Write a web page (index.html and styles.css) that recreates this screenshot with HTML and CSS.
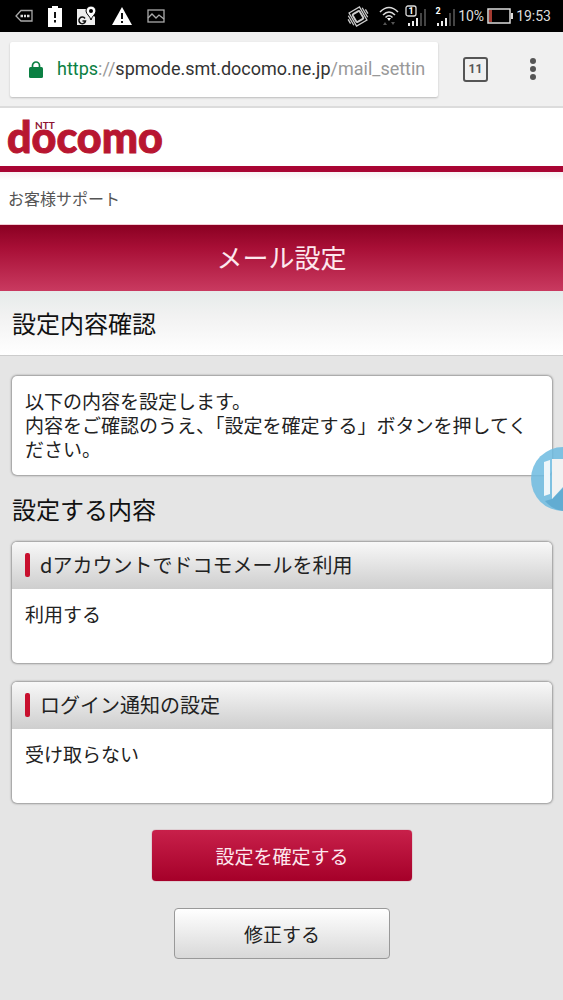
FILE: index.html
```html
<!DOCTYPE html>
<html lang="ja">
<head>
<meta charset="utf-8">
<meta name="viewport" content="width=device-width, initial-scale=1">
<title>メール設定</title>
<link rel="stylesheet" href="styles.css">
</head>
<body>
<div class="status-bar">
  <div class="status-left">
    <svg width="18" height="14" viewBox="0 0 18 14" fill="none" stroke="#aaa"><path d="M6 1.5H17V12H6L1 7Z" stroke-width="1.3"/><path d="M5.5 7H8M9 7h2M12 7h2.500" stroke="#ddd" stroke-width="2.500"/></svg>
    <svg width="14" height="21" viewBox="0 0 14 21"><path d="M4 0H10V2H14V21H0V2H4Z" fill="#fff"/><path d="M7 6V12M7 14V16.500" stroke="#111" stroke-width="2"/></svg>
    <svg width="20" height="20" viewBox="0 0 20 20"><path d="M0 3H10L18 11V19H0Z" fill="#eee"/><path d="M8 12.500A3.300 3.300 0 1 0 8.500 15H5.500" fill="none" stroke="#111" stroke-width="1.500"/><path d="M14 0A5 5 0 0 1 19 5C19 8 15 10 14 14C13 10 9 8 9 5A5 5 0 0 1 14 0Z" fill="#fff" stroke="#000"/><circle cx="14" cy="5" r="2" fill="#000"/></svg>
    <svg width="20" height="18" viewBox="0 0 20 18"><path d="M10 0L20 18H0Z" fill="#fff"/><path d="M10 6V12M10 14V16" stroke="#111" stroke-width="2"/></svg>
    <svg width="18" height="14" viewBox="0 0 18 14" fill="none" stroke="#aaa" stroke-width="1.300"><rect x="1" y="1" width="16" height="12"/><path d="M1 9L5 5L9 9L12 6L17 10"/></svg>
  </div>
  <div class="status-right">
    <svg width="22" height="21" viewBox="0 0 22 21" fill="none" stroke="#ccc" stroke-width="1.300"><g transform="rotate(-30 11 10.500)"><rect x="7" y="6" width="8" height="9" rx="1" stroke-width="1.800"/><path d="M5 3H17V18H5ZM3 5V16M19 5V16M1 8V13M21 8V13"/></g></svg>
    <svg class="wifi" width="20" height="20" viewBox="0 0 20 20" fill="none" stroke="#ddd" stroke-width="1.600"><path d="M1 6Q10-3 19 6M4 9Q10 3 16 9M6.500 11.500Q10 8 13.500 11.500"/><path d="M8 12H12L10 15Z" fill="#fff" stroke="none"/><path d="M4 19L6 16L8 19ZM12 16H16L14 19Z" fill="#555" stroke="none"/></svg>
    <svg width="21" height="22" viewBox="0 0 21 22"><rect x="1" y="1" width="10" height="10" rx="2" fill="none" stroke="#ddd" stroke-width="1.300"/><text class="sim" x="6" y="9" text-anchor="middle">1</text><path d="M4 21V18M8 21V16M12 21V13" stroke="#eee" stroke-width="2"/><path d="M16 21V8M20 21V4" stroke="#444" stroke-width="2"/></svg>
    <svg class="signal" width="21" height="22" viewBox="0 0 21 22"><text class="sim" x="4" y="9" text-anchor="middle">2</text><path d="M4 21V18M8 21V16M12 21V13" stroke="#eee" stroke-width="2"/><path d="M16 21V8M20 21V4" stroke="#444" stroke-width="2"/></svg>
    <span>10%</span>
    <svg width="26" height="16" viewBox="0 0 26 16"><rect x="1" y="1" width="22" height="14" fill="none" stroke="#ddd" stroke-width="1.500"/><path d="M2 2H5V14H2Z" fill="#a43a30"/><path d="M24 5H26V11H24Z" fill="#ddd"/></svg>
    <span>19:53</span>
  </div>
</div>

<div class="toolbar">
  <button class="address" type="button" aria-label="アドレスバー">
    <svg width="14" height="17" viewBox="0 0 14 17"><path d="M3.500 7V4.500A3.500 3.500 0 0 1 10.500 4.500V7" fill="none" stroke="#0b8043" stroke-width="1.700"/><rect y="6" width="14" height="11" rx="1.500" fill="#0b8043"/></svg>
    <span class="url"><span class="scheme">https</span><span class="dim">://</span>spmode.smt.docomo.ne.jp<span class="dim">/mail_settin</span></span>
  </button>
  <button class="tabs" type="button" aria-label="タブ">11</button>
  <button class="more" type="button" aria-label="メニュー">
    <svg width="6" height="22" viewBox="0 0 6 22" fill="#555"><circle cx="3" cy="3" r="3"/><circle cx="3" cy="11" r="3"/><circle cx="3" cy="19" r="3"/></svg>
  </button>
</div>

<header class="brand">
  <svg width="172" height="58" viewBox="-8 -13 172 58" role="img" aria-label="NTT docomo"><text class="wordmark" x="-1" y="32">docomo</text><text class="ntt" x="27" y="8">NTT</text></svg>
</header>
<div class="support">お客様サポート</div>
<h1 class="title">メール設定</h1>

<main>
  <h2 class="section">設定内容確認</h2>
  <div class="content">
    <p class="panel notice">以下の内容を設定します。<br>内容をご確認のうえ、「設定を確定する」ボタンを押してください。</p>
    <h2 class="subhead">設定する内容</h2>
    <section class="panel card">
      <h3>dアカウントでドコモメールを利用</h3>
      <p>利用する</p>
    </section>
    <section class="panel card">
      <h3>ログイン通知の設定</h3>
      <p>受け取らない</p>
    </section>
    <div class="actions">
      <button class="btn confirm" type="button">設定を確定する</button>
      <button class="btn edit" type="button">修正する</button>
    </div>
  </div>
  <div class="floating">
    <svg width="64" height="64" viewBox="0 0 64 64"><circle cx="32" cy="32" r="32" fill="#6dbbe0" fill-opacity=".85"/><path d="M21 52L32 41V64Q22 63 14 54Z" fill="#4e9fc8" opacity=".6"/><path d="M13 15L19 13V47L13 49Z" fill="#eef6fa"/><path d="M21 12H44V40H32L21 52Z" fill="#f2f2f2"/></svg>
  </div>
</main>
</body>
</html>
```

FILE: styles.css
```css
* { box-sizing: border-box; }
body {
  margin: 0;
  min-height: 100vh;
  display: flex;
  flex-direction: column;
  background: #e5e5e5;
  color: #222;
  font-family: "Noto Sans CJK JP", sans-serif;
}
h1, h2, h3, p { margin: 0; font-weight: 400; }
button { font-family: inherit; border: 0; margin: 0; }

.status-bar {
  height: 32px;
  padding: 0 12px 0 15px;
  display: flex;
  align-items: center;
  justify-content: space-between;
  background: #000;
  color: #ddd;
  font: 14px Roboto, sans-serif;
}
.status-left, .status-right { display: flex; align-items: center; }
.status-left { gap: 15px; }
.status-right { gap: 3px; }
.wifi { margin: 0 3px 0 7px; }
.signal { margin-left: 5px; }
.sim { font: 700 9px Roboto, sans-serif; fill: #fff; }

.toolbar {
  height: 76px;
  padding: 0 27px 0 10px;
  display: flex;
  align-items: center;
  background: #f0f0f0;
  border-bottom: 2px solid #dcdcdc;
}
.address {
  flex: 1;
  min-width: 0;
  height: 55px;
  padding: 0 8px 0 19px;
  display: flex;
  align-items: center;
  gap: 14px;
  background: #fff;
  border-radius: 2px;
  box-shadow: 0 1px 2px #bbb;
  color: #333;
  text-align: left;
}
.address svg { flex: none; }
.url {
  overflow: hidden;
  white-space: nowrap;
  font: 18px/26px Roboto, sans-serif;
}
.scheme { color: #0b8043; }
.dim { color: #999; }
.tabs {
  width: 25px;
  height: 25px;
  margin: 0 42px 0 25px;
  padding: 0;
  border: 2px solid #555;
  border-radius: 3px;
  background: none;
  color: #555;
  font: 700 12px Roboto, sans-serif;
}
.more { padding: 0; display: flex; background: none; }

.brand {
  background: #fff;
  border-bottom: 6px solid #a90533;
}
.brand svg { display: block; }
.wordmark {
  font: 900 43px Lato, sans-serif;
  fill: #b81631;
  stroke: #b81631;
  stroke-width: 1px;
}
.ntt { font: 700 10px Lato, sans-serif; fill: #8c1230; }

.support {
  padding: 14px 8px;
  background: linear-gradient(#f8f0f2, #fff 8px);
  border-bottom: 1px solid #f3ccd5;
  color: #555;
  font-size: 16px;
  line-height: 24px;
}
.title {
  padding: 13px 0 15px;
  background: linear-gradient(#8a0022, #a80f36 35%, #c93a60);
  color: #fde8ee;
  font-size: 26px;
  line-height: 38px;
  text-align: center;
}
main { position: relative; flex: 1; overflow: hidden; }
.section {
  padding: 16px 12px;
  background: linear-gradient(#e6ebea, #f2f2f2 40%, #fff);
  border-bottom: 1px solid #ccc;
  color: #111;
  font-size: 24px;
  line-height: 32px;
}
.content { padding: 20px 11px 39px 12px; }
.panel {
  overflow: hidden;
  background: #fff;
  border-radius: 5px;
  box-shadow: 0 0 2px 1px #999;
  font-size: 19px;
  line-height: 24px;
}
.notice { padding: 13px 12px 14px 13px; }
.subhead {
  margin: 18px 0 17px;
  color: #111;
  font-size: 24px;
  line-height: 32px;
}
.card + .card { margin-top: 19px; }
.card h3 {
  padding: 11px 13px 12px;
  display: flex;
  align-items: center;
  gap: 10px;
  background: linear-gradient(#f8f8f8, #cecece);
  font-size: 20px;
  line-height: 24px;
}
.card h3::before {
  content: "";
  width: 5px;
  height: 24px;
  border-radius: 2px;
  background: #c8102e;
}
.card p { padding: 13px 13px 37px; }
.actions {
  margin-top: 27px;
  display: flex;
  flex-direction: column;
  align-items: center;
  gap: 27px;
}
.btn {
  height: 51px;
  padding: 0;
  border-radius: 4px;
  font-size: 19px;
  line-height: 24px;
}
.confirm {
  width: 48%;
  background: linear-gradient(#c8204a, #a50029);
  box-shadow: 0 0 1px #a50029;
  color: #fde8ee;
}
.edit {
  width: 40%;
  background: linear-gradient(#fff, #d8d8d8);
  border: 1px solid #999;
  color: #222;
}
.floating {
  position: absolute;
  top: 156px;
  right: -32px;
}
.floating svg { display: block; }
```
